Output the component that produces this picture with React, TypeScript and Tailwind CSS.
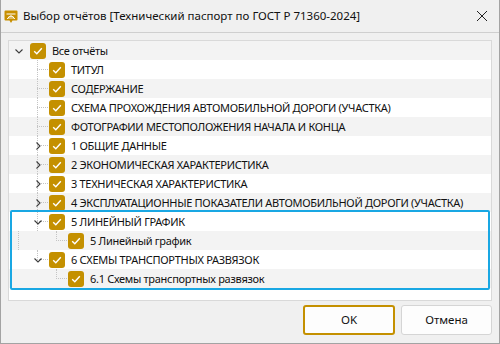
import React from "react";

type Row = {
  label: string;
  level: number;
  chevron?: "open" | "closed";
  last?: boolean;
  parentLast?: boolean;
};

const rows: Row[] = [
  { label: "Все отчёты", level: 0, chevron: "open" },
  { label: "ТИТУЛ", level: 1 },
  { label: "СОДЕРЖАНИЕ", level: 1 },
  { label: "СХЕМА ПРОХОЖДЕНИЯ АВТОМОБИЛЬНОЙ ДОРОГИ (УЧАСТКА)", level: 1 },
  { label: "ФОТОГРАФИИ МЕСТОПОЛОЖЕНИЯ НАЧАЛА И КОНЦА", level: 1 },
  { label: "1 ОБЩИЕ ДАННЫЕ", level: 1, chevron: "closed" },
  { label: "2 ЭКОНОМИЧЕСКАЯ ХАРАКТЕРИСТИКА", level: 1, chevron: "closed" },
  { label: "3 ТЕХНИЧЕСКАЯ ХАРАКТЕРИСТИКА", level: 1, chevron: "closed" },
  { label: "4 ЭКСПЛУАТАЦИОННЫЕ ПОКАЗАТЕЛИ АВТОМОБИЛЬНОЙ ДОРОГИ (УЧАСТКА)", level: 1, chevron: "closed" },
  { label: "5 ЛИНЕЙНЫЙ ГРАФИК", level: 1, chevron: "open" },
  { label: "5 Линейный график", level: 2, last: true },
  { label: "6 СХЕМЫ ТРАНСПОРТНЫХ РАЗВЯЗОК", level: 1, chevron: "open", last: true },
  { label: "6.1 Схемы транспортных развязок", level: 2, last: true, parentLast: true },
];

function Chevron({ open }: { open: boolean }) {
  return (
    <svg width="10" height="10" viewBox="0 0 10 10" className="relative z-10">
      {open ? (
        <path d="M1.5 3.5 L5 7 L8.5 3.5" fill="none" stroke="#3c3c3c" strokeWidth="1.1" />
      ) : (
        <path d="M3.5 1.5 L7 5 L3.5 8.5" fill="none" stroke="#3c3c3c" strokeWidth="1.1" />
      )}
    </svg>
  );
}

function Check() {
  return (
    <div className="w-[16px] h-[16px] rounded-[3px] bg-[#c49000] flex items-center justify-center shrink-0">
      <svg width="12" height="12" viewBox="0 0 12 12">
        <path d="M2.2 6.3 L4.8 8.8 L9.8 3.2" fill="none" stroke="#ffffff" strokeWidth="1.4" />
      </svg>
    </div>
  );
}

function TreeRow({ row, index }: { row: Row; index: number }) {
  const bg = index % 2 === 0 ? "bg-[#f3f3f3]" : "bg-white";
  return (
    <div className={`flex items-center h-[19px] ${bg}`}>
      {row.level === 2 && (
        <div className="w-[19px] h-full relative shrink-0">
          {!row.parentLast && (
            <div className="absolute left-[9px] top-0 bottom-0 border-l border-dotted border-[#c4c4c4]" />
          )}
        </div>
      )}
      {row.level === 2 && <div className="w-[19px] h-full shrink-0" />}
      {row.level === 1 && <div className="w-[19px] h-full shrink-0" />}
      <div className="w-[19px] h-full relative shrink-0 flex items-center justify-center">
        {row.level > 0 && (
          <>
            <div
              className={`absolute left-[9px] top-0 border-l border-dotted border-[#c4c4c4] ${
                row.last ? "h-[10px]" : "bottom-0"
              }`}
            />
            <div className="absolute left-[9px] right-[-1px] top-[9px] border-t border-dotted border-[#c4c4c4]" />
          </>
        )}
        {row.chevron && (
          <div className="relative z-10 flex items-center justify-center w-[10px] h-[10px]">
            <Chevron open={row.chevron === "open"} />
          </div>
        )}
      </div>
      <div className="w-[2px] shrink-0" />
      <Check />
      <div className="w-[6px] shrink-0" />
      <span className="text-[11px] leading-none text-[#111] whitespace-nowrap tracking-[-0.3px]">{row.label}</span>
    </div>
  );
}

export default function App() {
  return (
    <div className="w-[500px] h-[344px] bg-[#f0f0f0] border-l border-r border-b border-[#a3a3a3] flex flex-col font-['Noto_Sans',sans-serif]">
      <div className="h-[33px] border-b border-[#cfcfcf] flex items-center shrink-0">
        <div className="ml-[3px] w-[14px] h-[14px] mt-[1px]">
          <svg width="14" height="14" viewBox="0 0 14 14">
            <path d="M1.5 0.5 H12.5 A1 1 0 0 1 13.5 1.5 V9.5 A1 1 0 0 1 12.5 10.5 H8.5 L7 13 L5.5 10.5 H1.5 A1 1 0 0 1 0.5 9.5 V1.5 A1 1 0 0 1 1.5 0.5 Z" fill="#c88f00" />
            <path d="M2.5 4 H11.5" stroke="#fff" strokeWidth="1" />
            <path d="M3.2 9 Q7 3 10.8 9" fill="none" stroke="#fff" strokeWidth="1" />
            <path d="M5 6.5 V9 M9 6.5 V9 M7 5.2 V9" stroke="#fff" strokeWidth="0.8" />
          </svg>
        </div>
        <span className="ml-[5px] text-[11.5px] text-[#111] whitespace-nowrap">
          Выбор отчётов [Технический паспорт по ГОСТ Р 71360-2024]
        </span>
        <div className="ml-auto mr-[11px] w-[12px] h-[12px]">
          <svg width="12" height="12" viewBox="0 0 12 12">
            <path d="M1 1 L11 11 M11 1 L1 11" stroke="#222" strokeWidth="1" />
          </svg>
        </div>
      </div>

      <div className="mt-[7px] mx-[7px] h-[261px] border border-[#d9d9d9] bg-white shrink-0 flex flex-col overflow-hidden">
        {rows.slice(0, 9).map((r, i) => (
          <TreeRow key={i} row={r} index={i} />
        ))}
        <div className="relative">
          {rows.slice(9).map((r, i) => (
            <TreeRow key={i + 9} row={r} index={i + 9} />
          ))}
          <div className="absolute -top-[2px] -bottom-[2px] left-[1px] right-[1px] border-2 border-[#19a7e3] rounded-[2px] z-20 pointer-events-none" />
        </div>
      </div>

      <div className="mt-[4px] mr-[7px] flex justify-end gap-[6px]">
        <button className="w-[92px] h-[30px] bg-[#fdfdfd] border-2 border-[#c49000] rounded-[3px] text-[11.5px] text-[#111]">
          OK
        </button>
        <button className="w-[91px] h-[30px] bg-[#fdfdfd] border border-[#d5d5d5] rounded-[3px] text-[11.5px] text-[#111]">
          Отмена
        </button>
      </div>
    </div>
  );
}
